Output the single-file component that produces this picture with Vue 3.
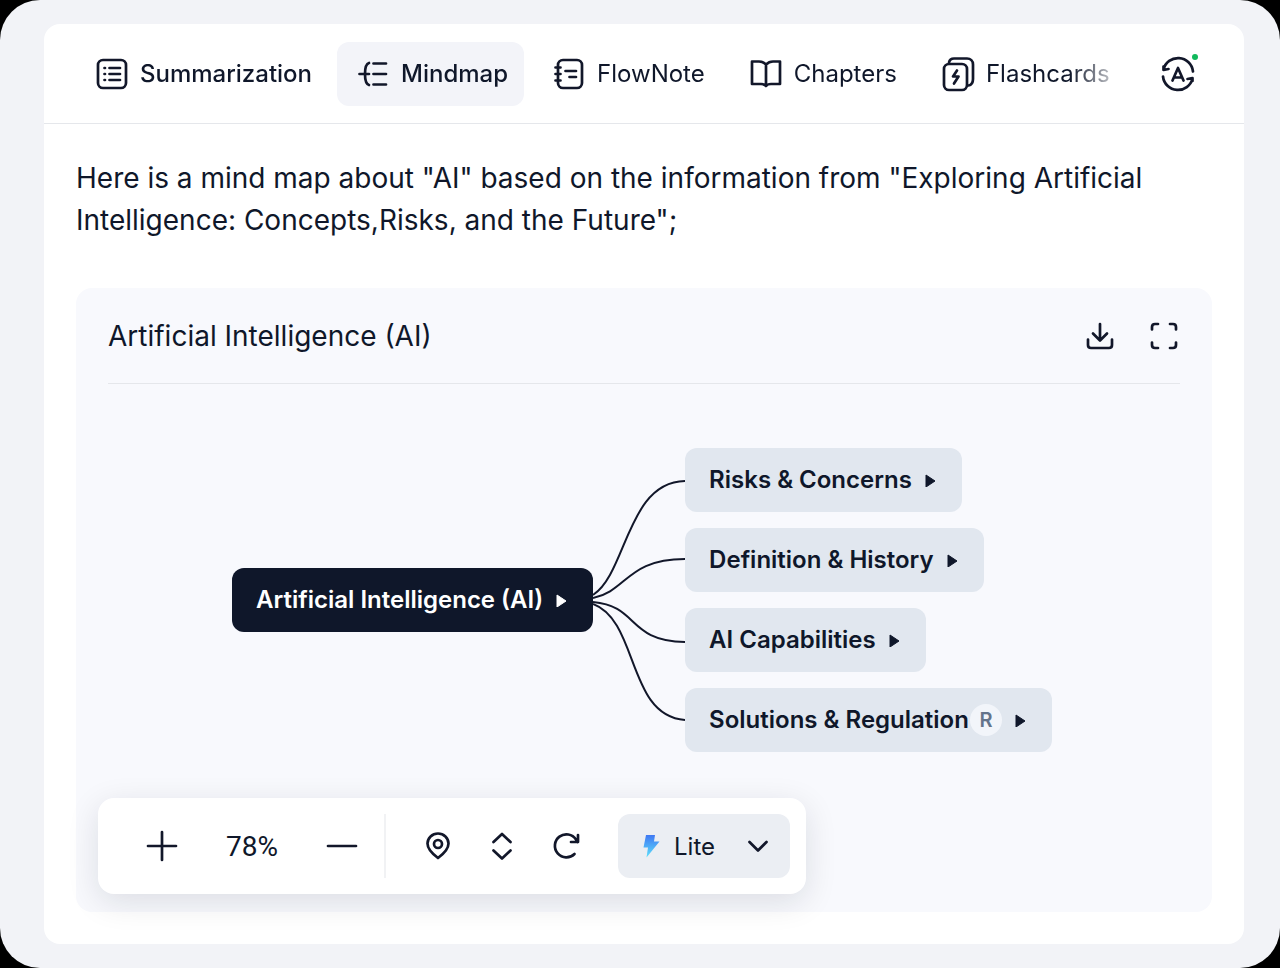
<script setup>
import { ref } from 'vue';

const tabs = ['Summarization', 'Mindmap', 'FlowNote', 'Chapters', 'Flashcards'];
const activeTab = ref('Mindmap');

const rootTopic = 'Artificial Intelligence (AI)';
const branches = [
  { label: 'Risks & Concerns' },
  { label: 'Definition & History' },
  { label: 'AI Capabilities' },
  { label: 'Solutions & Regulation', badge: 'R' }
];

const zoom = ref(78);
const mode = ref('Lite');

const changeZoom = (step) => {
  zoom.value = Math.min(200, Math.max(10, zoom.value + step));
};
</script>

<template>
  <div class="page">
    <main class="panel">
      <header class="topbar">
        <nav class="tabs" role="tablist">
          <button
            v-for="tab in tabs"
            :key="tab"
            type="button"
            role="tab"
            class="tab"
            :class="{ active: activeTab === tab, strong: tab === 'Summarization' }"
            :aria-selected="activeTab === tab"
            @click="activeTab = tab"
          >
            <svg v-if="tab === 'Summarization'" class="icon" viewBox="0 0 32 32">
              <rect x="2" y="2" width="28" height="28" rx="5" />
              <path d="M13.5 10H24M13.5 16H24M13.5 22H24" />
              <path d="M8.5 10h.5M8.5 16h.5M8.5 22h.5" />
            </svg>
            <svg v-else-if="tab === 'Mindmap'" class="icon" viewBox="0 0 32 32">
              <path d="M2.5 16H12M16.500 5.500H29M16.500 16H29M16.500 26.500H29" />
              <path d="M12 5C8.500 6 8 10 8 16s.5 10 4 11" />
            </svg>
            <svg v-else-if="tab === 'FlowNote'" class="icon" viewBox="0 0 32 32">
              <rect x="5" y="2" width="24" height="28" rx="5" />
              <path d="M2.500 9.500H7.500M2.500 16H7.500M2.500 22.500H7.500M12.500 13H23M16.500 19H23" />
            </svg>
            <svg v-else-if="tab === 'Chapters'" class="icon" viewBox="0 0 32 32">
              <path d="M16 6.500C14 4.500 12 3.500 9 3.500H2V26H11C13.500 26 15 26.500 16 28C17 26.500 18.500 26 21 26H30V3.500H23C20 3.500 18 4.500 16 6.500ZM16 6.500V28" />
            </svg>
            <svg v-else class="icon" viewBox="0 0 32 32">
              <rect x="2" y="6" width="23" height="26" rx="5" />
              <path d="M7 4.500C7.500 2 9 0.500 12 0.500H25C28.500 0.500 31 3 31 6.500V21C31 24.500 29.500 27 26.500 27.500" />
              <path d="M15 12.500L11 18.500H16.500L12 25.500" />
            </svg>
            <span>{{ tab }}</span>
          </button>
        </nav>
        <button type="button" class="translate" aria-label="Translate">
          <svg class="icon" viewBox="0 0 36 36">
            <path d="M3.500 13.500A15 15 0 0 1 33 15.500M3.500 10.500V14L8.500 13" />
            <path d="M32.500 22.500A15 15 0 0 1 3 20.500M32.500 25V22L27.500 23" />
            <path d="M12.500 24.500L18 12L23.500 24.500M14.500 21.500H21.500" />
          </svg>
          <i class="status-dot"></i>
        </button>
      </header>

      <section class="content">
        <p class="intro">
          Here is a mind map about "AI" based on the information from "Exploring Artificial
          Intelligence: Concepts,Risks, and the Future";
        </p>

        <article class="card">
          <header class="card-header">
            <h2>{{ rootTopic }}</h2>
            <div class="card-actions">
              <button type="button" aria-label="Download">
                <svg class="icon" viewBox="0 0 32 32">
                  <path d="M16 4V20M9 13.500L16 20.500L23 13.500M4 19.500V25Q4 28 7 28H25Q28 28 28 25V19.500" />
                </svg>
              </button>
              <button type="button" aria-label="Full screen">
                <svg class="icon" viewBox="0 0 32 32">
                  <path d="M4 9.500V7Q4 4 7 4H10M22 4H25Q28 4 28 7V9.500M28 22.500V25Q28 28 25 28H22M10 28H7Q4 28 4 25V22.500" />
                </svg>
              </button>
            </div>
          </header>

          <div class="mindmap">
            <button type="button" class="node root">
              <span>{{ rootTopic }}</span>
              <svg class="caret" viewBox="0 0 14 14"><path d="M2 2L11 8L2 14Z" /></svg>
            </button>
            <svg class="links" viewBox="0 0 92 304" aria-hidden="true">
              <path d="M0 147C34 125 34 34 92 33" />
              <path d="M0 150C34 143 34 111 92 111" />
              <path d="M0 154C46 158 34 193 92 194" />
              <path d="M0 156C46 173 34 268 92 272" />
            </svg>
            <div class="branches">
              <button v-for="item in branches" :key="item.label" type="button" class="node">
                <span>{{ item.label }}</span>
                <span v-if="item.badge" class="badge">{{ item.badge }}</span>
                <svg class="caret" viewBox="0 0 14 14"><path d="M2 2L11 8L2 14Z" /></svg>
              </button>
            </div>
          </div>

          <div class="toolbar" role="toolbar">
            <button type="button" class="tool" aria-label="Zoom in" @click="changeZoom(1)">
              <svg class="icon" viewBox="0 0 32 32"><path d="M2 16H30M16 2V30" /></svg>
            </button>
            <output class="zoom">{{ zoom }}%</output>
            <button type="button" class="tool" aria-label="Zoom out" @click="changeZoom(-1)">
              <svg class="icon" viewBox="0 0 32 32"><path d="M2 16H30" /></svg>
            </button>
            <span class="divider"></span>
            <button type="button" class="tool" aria-label="Center map">
              <svg class="icon" viewBox="0 0 32 32">
                <path d="M16 28C12 25 5.500 20 5.500 13.500A10.500 10 0 0 1 26.500 13.500C26.500 20 20 25 16 28Z" />
                <circle cx="16" cy="14" r="4" />
              </svg>
            </button>
            <button type="button" class="tool" aria-label="Expand or collapse">
              <svg class="icon" viewBox="0 0 32 32"><path d="M7.500 12L16 4L24.500 12M7.500 20.500L16 28.500L24.500 20.500" /></svg>
            </button>
            <button type="button" class="tool" aria-label="Regenerate">
              <svg class="icon" viewBox="0 0 32 32">
                <path d="M24.500 24A11.500 11.500 0 1 1 26 9.500L27.500 12M28 5V12H21" />
              </svg>
            </button>
            <div class="mode">
              <svg class="bolt" viewBox="0 0 18 24">
                <defs>
                  <linearGradient id="boltFill" x1="0" y1="0" x2="0" y2="1">
                    <stop offset="0" stop-color="#3f78f3" />
                    <stop offset="1" stop-color="#5ee0fb" />
                  </linearGradient>
                </defs>
                <path d="M4 1H13L12 7.500H17.500L4.500 23.500L6 13.500H1.500Z" fill="url(#boltFill)" />
              </svg>
              <select v-model="mode" aria-label="Model">
                <option>Lite</option>
                <option>Pro</option>
              </select>
              <svg class="icon chevron" viewBox="0 0 32 32"><path d="M7.500 12L16 20.500L24.500 12" /></svg>
            </div>
          </div>
        </article>
      </section>
    </main>
  </div>
</template>

<style>
body {
  background: #000;
}
</style>

<style scoped>
.page {
  box-sizing: border-box;
  min-height: 100vh;
  padding: 24px 36px 24px 44px;
  background: #f2f3f7;
  border-radius: 40px;
  color: #0f172a;
  font-family: Inter, sans-serif;
  font-size: 24px;
}

button {
  border: none;
  background: none;
  padding: 0;
  color: inherit;
  font: inherit;
  cursor: pointer;
}

.icon {
  display: block;
  flex: none;
  width: 32px;
  height: 32px;
  overflow: visible;
  fill: none;
  stroke: #12172a;
  stroke-width: 2.7;
  stroke-linecap: round;
  stroke-linejoin: round;
}

.panel {
  background: #fff;
  border-radius: 16px;
}

/* Top bar */
.topbar {
  box-sizing: border-box;
  display: flex;
  align-items: center;
  justify-content: space-between;
  height: 100px;
  padding: 0 48px 0 32px;
  border-bottom: 1px solid #e5e7eb;
}

.tabs {
  display: flex;
  gap: 9px;
  min-width: 0;
  overflow: hidden;
  -webkit-mask-image: linear-gradient(to left, transparent, #000 56px);
  mask-image: linear-gradient(to left, transparent, #000 56px);
}

.tab {
  display: flex;
  flex: none;
  align-items: center;
  gap: 12px;
  height: 64px;
  padding: 0 16px 0 20px;
  border-radius: 12px;
  line-height: 32px;
}

.tab.strong,
.tab.active {
  font-weight: 500;
}

.tab.active {
  background: #f3f4f9;
}

.translate {
  position: relative;
  flex: none;
}

.translate .icon {
  width: 36px;
  height: 36px;
}

.status-dot {
  position: absolute;
  top: -2px;
  right: -2px;
  width: 6px;
  height: 6px;
  border-radius: 50%;
  background: #10b95c;
}

/* Content */
.content {
  padding: 33px 32px 32px;
}

.intro {
  margin: 0 0 47px;
  font-size: 28px;
  line-height: 42px;
}

.card {
  display: flow-root;
  background: #f8f9fd;
  border-radius: 16px;
}

.card-header {
  box-sizing: border-box;
  display: flex;
  align-items: center;
  justify-content: space-between;
  height: 96px;
  margin: 0 32px;
  border-bottom: 1px solid #e5e7eb;
}

.card-header h2 {
  margin: 0;
  font-size: 28px;
  font-weight: 400;
  line-height: 32px;
}

.card-actions {
  display: flex;
  gap: 32px;
}

/* Mind map */
.mindmap {
  display: flex;
  align-items: center;
  justify-content: center;
  padding: 64px 36px 0 32px;
}

.node {
  display: flex;
  align-items: center;
  height: 64px;
  padding: 0 24px;
  border-radius: 12px;
  background: #e1e7ef;
  font-weight: 600;
  line-height: 32px;
  white-space: nowrap;
}

.node.root {
  background: #0f172a;
  color: #fff;
}

.caret {
  width: 14px;
  height: 14px;
  margin-left: 12px;
  fill: currentColor;
  stroke: currentColor;
  stroke-width: 1;
  stroke-linejoin: round;
}

.badge {
  width: 32px;
  margin-left: 1px;
  border-radius: 50%;
  background: #f2f5fa;
  color: #64748b;
  font-size: 20px;
  text-align: center;
}

.links {
  flex: none;
  width: 92px;
  height: 304px;
  fill: none;
  stroke: #12172a;
  stroke-width: 2;
}

.branches {
  display: flex;
  flex-direction: column;
  align-items: flex-start;
  gap: 16px;
}

/* Floating toolbar */
.toolbar {
  display: flex;
  align-items: center;
  width: fit-content;
  margin: 46px 22px 18px;
  padding: 16px 16px 16px 32px;
  background: #fff;
  border-radius: 16px;
  box-shadow: 0 8px 32px rgba(15, 23, 42, 0.12);
}

.tool {
  display: grid;
  place-items: center;
  width: 64px;
  height: 64px;
}

.zoom {
  width: 116px;
  font-family: Roboto, sans-serif;
  font-size: 28px;
  text-align: center;
}

.divider {
  width: 2px;
  height: 64px;
  margin: 0 20px 0 10px;
  background: #f1f2f4;
}

.mode {
  position: relative;
  margin-left: 20px;
}

.mode select {
  appearance: none;
  width: 172px;
  height: 64px;
  padding: 0 56px;
  border: none;
  border-radius: 12px;
  background: #ebeef3;
  color: inherit;
  font: inherit;
}

.bolt,
.chevron {
  position: absolute;
  pointer-events: none;
}

.bolt {
  top: 20px;
  left: 24px;
  width: 18px;
  height: 24px;
}

.chevron {
  top: 16px;
  right: 16px;
}
</style>
